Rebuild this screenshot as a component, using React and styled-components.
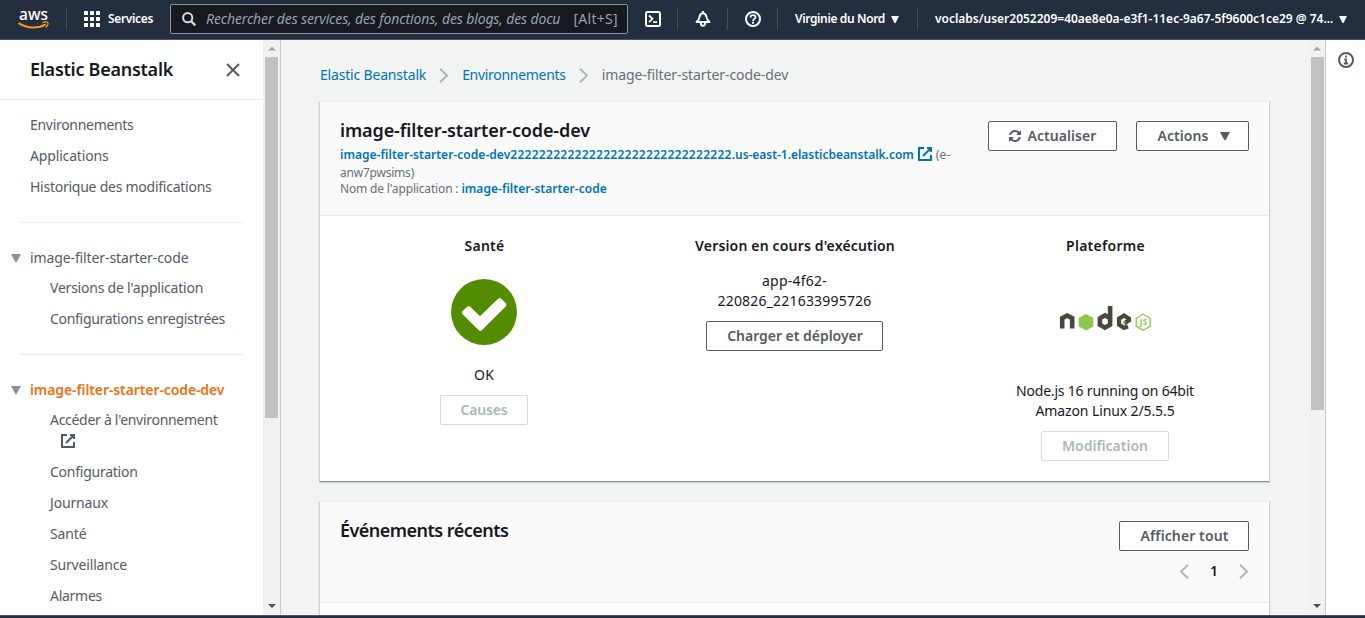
import React from 'react';
import styled, { createGlobalStyle, css } from 'styled-components';

const GlobalStyle = createGlobalStyle`
  * { box-sizing: border-box; }
  body {
    margin: 0;
    overflow: hidden;
    background: #f2f3f3;
    color: #16191f;
    font: 400 14px/20px "Noto Sans", "Open Sans", sans-serif;
    font-variant-ligatures: none;
  }
  svg { display: block; flex: none; overflow: visible; }
`;

const Text = styled.span`
  letter-spacing: ${(p) => p.$track || 0}px;
  white-space: pre;
`;

const Page = styled.div`
  display: flex;
  flex-direction: column;
  height: 618px;
  overflow: hidden;
`;

/* ---------- top navigation ---------- */

const TopBar = styled.header`
  display: flex;
  align-items: flex-start;
  flex: none;
  height: 40px;
  background: #232f3e;
  border-bottom: 1px solid #4c5562;
  color: #fff;
  font-size: 12px;
  font-weight: 600;
`;

const TopItem = styled.div`
  display: flex;
  align-items: center;
  flex: none;
  gap: ${(p) => p.$gap || 0}px;
  width: ${(p) => p.$width}px;
  height: 38px;
  padding-left: ${(p) => p.$pad || 0}px;
`;

const Separator = styled.div`
  flex: none;
  width: 1px;
  height: 22px;
  margin-top: 8px;
  background: #414d5c;
`;

const AwsWord = styled.text`
  font: 500 16.5px "Noto Sans", sans-serif;
  fill: #fff;
`;

const SearchBox = styled.div`
  display: flex;
  align-items: center;
  flex: none;
  width: 458px;
  height: 30px;
  margin-top: 4px;
  padding: 0 9px 0 11px;
  background: #16191f;
  border: 1px solid #879596;
  border-radius: 2px;
  color: #95a5a6;
  font-size: 14px;
  font-weight: 400;
`;

const SearchHint = styled.div`
  flex: none;
  margin-left: 10px;
  font-style: italic;
`;

const Shortcut = styled.div`
  margin-left: auto;
`;

/* ---------- scroll bars ---------- */

const Track = styled.div`
  display: flex;
  flex-direction: column;
  align-items: center;
  flex: none;
  width: ${(p) => p.$width}px;
  height: 100%;
  background: #f1f1f1;
  border-right: 1px solid #c6c9ca;
`;

const Thumb = styled.div`
  width: 13px;
  height: ${(p) => p.$height}px;
  background: #c1c1c1;
`;

const TrackEnd = styled.div`
  display: flex;
  justify-content: center;
  align-items: center;
  flex: none;
  height: 17px;
  margin-top: ${(p) => (p.$last ? 'auto' : 0)};
  padding-bottom: ${(p) => (p.$last ? 2 : 0)}px;
`;

function ScrollBar({ width, thumb }) {
  return (
    <Track $width={width}>
      <TrackEnd>
        <svg width="8" height="5" viewBox="0 0 8 5"><path d="M0 4.500 4 .5l4 4z" fill="#a3a3a3" /></svg>
      </TrackEnd>
      <Thumb $height={thumb} />
      <TrackEnd $last>
        <svg width="8" height="4" viewBox="0 0 8 4"><path d="M0 0h8L4 4z" fill="#505050" /></svg>
      </TrackEnd>
    </Track>
  );
}

/* ---------- side navigation ---------- */

const Body = styled.div`
  display: flex;
  flex: 1;
  min-height: 0;
`;

const Sidebar = styled.aside`
  flex: none;
  width: 263px;
  background: #fff;
  color: #545b64;
`;

const SidebarHeader = styled.div`
  display: flex;
  justify-content: space-between;
  align-items: center;
  height: 60px;
  padding: 0 22px 0 30px;
  border-bottom: 1px solid #eaeded;
  color: #16191f;
  font-size: 18px;
  font-weight: 600;
  line-height: 18px;
`;

const SidebarTitle = styled(Text)`
  padding-bottom: 2px;
`;

const NavGroup = styled.nav`
  display: flex;
  flex-direction: column;
  gap: 11px;
  margin: 0 20px;
  padding: ${(p) => (p.$first ? 15 : 25)}px 0 25px 10px;
  border-bottom: 1px solid #eaeded;
`;

const NavSection = styled.div`
  display: flex;
  align-items: center;
  gap: 9px;
  margin: 0 0 -1px -19px;
  color: ${(p) => (p.$active ? '#ec7211' : 'inherit')};
  font-weight: ${(p) => (p.$active ? 600 : 400)};
`;

const NavLink = styled.div`
  padding-left: ${(p) => (p.$child ? 20 : 0)}px;
`;

const LinkIcon = styled.div`
  height: 21px;
  padding: 3px 0 0 10px;
`;

/* ---------- content ---------- */

const Main = styled.main`
  flex: none;
  width: 1028px;
  padding: 25px 39px 0 38px;
`;

const Breadcrumbs = styled.div`
  display: flex;
  align-items: center;
  gap: 13px;
  height: 20px;
  padding-left: 1px;
  color: #0073bb;
`;

const Crumb = styled(Text)`
  color: ${(p) => (p.$current ? '#687078' : 'inherit')};
`;

const Card = styled.section`
  width: 951px;
  height: ${(p) => p.$height}px;
  margin-top: ${(p) => p.$gap}px;
  background: #fff;
  border: 1px solid #cbcfd0;
  border-top-color: #eaeded;
  border-bottom-color: #879596;
  box-shadow: 0 1px 1px rgba(0, 28, 36, 0.15);
`;

const CardHeader = styled.div`
  display: flex;
  justify-content: space-between;
  height: ${(p) => p.$height}px;
  padding: 19px 20px 0;
  background: #fafafa;
  border-bottom: 1px solid #eaeded;
`;

const CardTitle = styled.h2`
  margin: 0;
  font-size: 18px;
  font-weight: 600;
  line-height: 18px;
`;

const Details = styled.div`
  margin-top: 5px;
  color: #687078;
  font-size: 12px;
  line-height: 15px;
`;

const DetailRow = styled.div`
  display: flex;
  align-items: center;
  gap: ${(p) => p.$gap || 0}px;
  height: ${(p) => p.$height}px;
`;

const StrongLink = styled(Text)`
  color: #0073bb;
  font-weight: 600;
`;

const ButtonRow = styled.div`
  display: flex;
  align-items: flex-start;
  gap: 19px;
`;

const Button = styled.button`
  display: flex;
  align-items: center;
  justify-content: center;
  flex: none;
  gap: ${(p) => p.$gap || 0}px;
  width: ${(p) => p.$width}px;
  height: 30px;
  padding: 0 0 0 ${(p) => p.$nudge || 0}px;
  background: #fff;
  border: 1px solid #545b64;
  border-radius: 2px;
  color: #545b64;
  font: 600 14px/20px "Noto Sans", sans-serif;
  ${(p) => p.$disabled && css`
    border-color: #d5dbdb;
    color: #aab7b8;
  `}
`;

const Columns = styled.div`
  display: grid;
  grid-template-columns: repeat(3, 310.5px);
  padding: 20px 0 0 8.75px;
`;

const Column = styled.div`
  display: flex;
  flex-direction: column;
  align-items: center;
  text-align: center;
`;

const Heading = styled.div`
  padding-left: 1px;
  font-weight: 600;
`;

const Picture = styled.div`
  display: flex;
  align-items: center;
  justify-content: center;
  height: ${(p) => p.$height}px;
  margin: ${(p) => p.$margin};
`;

const Lines = styled.div`
  display: flex;
  flex-direction: column;
  margin: ${(p) => p.$top || 0}px 0 10px;
`;

const Side = styled.div`
  display: flex;
  flex-direction: column;
  align-items: flex-end;
  gap: 10px;
`;

const Pager = styled.div`
  display: flex;
  align-items: center;
  gap: 21px;
  height: 20px;
  font-weight: 600;
`;

const InfoRail = styled.aside`
  flex: 1;
  padding: 12px 0 0 12px;
  background: #fff;
`;

const BottomBar = styled.div`
  flex: none;
  height: 3px;
  background: #232f3e;
  border-top: 1px solid #4c5562;
`;

/* ---------- icons ---------- */

const Caret = ({ color, width = 10, height = 8 }) => (
  <svg width={width} height={height} viewBox="0 0 10 8" preserveAspectRatio="none">
    <path d="M0 0h10L5.700 8H4.300z" fill={color} />
  </svg>
);

const External = ({ color }) => (
  <svg width="16" height="16" viewBox="0 0 16 16" fill="none" stroke={color} strokeWidth="2">
    <path d="M10 2h4v4M6 10l8-8M14 9.048V14H2V2h5" />
  </svg>
);

const Chevron = ({ back }) => (
  <svg width="10" height="15" viewBox="0 0 10 15" fill="none" stroke="#aab7b8" strokeWidth="2">
    <path d={back ? 'M9 .8 2 7.500l7 6.700' : 'M1 .8l7 6.700-7 6.700'} />
  </svg>
);

const AwsLogo = () => (
  <svg width="32" height="26" viewBox="0 0 32 26">
    <AwsWord x="1" y="14" textLength="29" lengthAdjust="spacingAndGlyphs">aws</AwsWord>
    <path d="M.5 17.200c7.500 5 19 5.800 27.200 1.200" fill="none" stroke="#f7981d" strokeWidth="2" />
    <path d="M24.500 16.700c2.300-1 4.500-1 5.300-.4.500 1-.3 3.600-1.900 5.300" fill="none" stroke="#f7981d" strokeWidth="1.300" />
  </svg>
);

const Grid = () => (
  <svg width="16" height="16" viewBox="0 0 16 16" fill="#fff">
    {[0, 6, 12].map((y) => [0, 6, 12].map((x) => (
      <rect key={`${x}-${y}`} x={x} y={y} width="4" height="4" rx=".5" />
    )))}
  </svg>
);

const SearchIcon = () => (
  <svg width="14" height="14" viewBox="0 0 14 14" fill="none" stroke="#d5dbdb" strokeWidth="2">
    <circle cx="5.700" cy="5.700" r="4.600" /><path d="m9 9 4.300 4.300" strokeWidth="2.400" />
  </svg>
);

const Terminal = () => (
  <svg width="16" height="16" viewBox="0 0 16 16" fill="none" stroke="#fff" strokeWidth="2">
    <rect x="1" y="1" width="14" height="14" rx="1.500" /><path d="m4 4.500 3.500 3.300L4 11.200M8 11.200h4" strokeWidth="1.800" />
  </svg>
);

const Bell = () => (
  <svg width="16" height="16" viewBox="0 0 16 16" fill="none" stroke="#fff" strokeWidth="1.900" strokeLinejoin="round">
    <path d="M1.500 11h13c-1.800-1.300-2.700-2.700-3-5C11.100 3.500 10 2.300 8 2.300S4.900 3.500 4.500 6c-.3 2.300-1.200 3.700-3 5zM8 0v2.500" />
    <path d="M5.800 12c0 1.700.8 2.800 2.200 2.800s2.200-1.100 2.200-2.800" />
  </svg>
);

const Help = () => (
  <svg width="16" height="16" viewBox="0 0 16 16" fill="none" stroke="#fff" strokeWidth="2">
    <circle cx="8" cy="8" r="7" />
    <path d="M5.500 6.500c0-1.400 1-2.300 2.500-2.300s2.500.9 2.500 2.100C10.500 7.900 8 7.900 8 9.900" strokeWidth="1.800" />
    <path d="M8 10.800v1.900" />
  </svg>
);

const Info = () => (
  <svg width="16" height="16" viewBox="0 0 16 16" fill="none" stroke="#545b64" strokeWidth="2">
    <circle cx="8" cy="8" r="7" />
    <path d="M8 3.500v2M6.300 7.500H8V11M5.800 11.500h4.400" strokeWidth="1.800" />
  </svg>
);

const Close = () => (
  <svg width="16" height="16" viewBox="0 0 16 16" fill="none" stroke="#545b64" strokeWidth="2">
    <path d="m2 2 12 12M14 2 2 14" />
  </svg>
);

const Refresh = () => (
  <svg width="12" height="12" viewBox="0 0 1536 1536" fill="#545b64">
    <path d="M1511 928q0 5-1 7-64 268-268 434.500T764 1536q-146 0-282.500-55T238 1324l-129 129q-19 19-45 19t-45-19-19-45V960q0-26 19-45t45-19h448q26 0 45 19t19 45-19 45l-137 137q71 66 161 102t187 36q134 0 250-65t186-179q11-17 53-117 8-23 30-23h192q13 0 22.500 9.500t9.500 22.500zm25-800v448q0 26-19 45t-45 19h-448q-26 0-45-19t-19-45 19-45l138-138Q969 256 768 256q-134 0-250 65T332 500q-11 17-53 117-8 23-30 23H50q-13 0-22.500-9.500T18 608v-7q65-268 270-434.500T768 0q146 0 284 55.500T1297 212l130-129q19-19 45-19t45 19 19 45z" />
  </svg>
);

const HealthOk = () => (
  <svg width="66" height="66" viewBox="0 0 66 66">
    <circle cx="33" cy="33" r="33" fill="#538b01" />
    <path d="M16.200 27.700q1.500-1.200 3 0L29 37.200 47.300 19.500q1.300-1 2.700 0l4.900 4.800q1.100 1.600 0 3L30.800 51.300q-1.600 1.200-3 0L11.300 35q-1-1.400 0-2.700z" fill="#fff" />
  </svg>
);

const JsWord = styled.text`
  font: 700 8px "Noto Sans", sans-serif;
  fill: #8cc84b;
`;

const NodeLogo = () => (
  <svg width="92" height="27" viewBox="-0.7 0 92 27" fill="none">
    <g stroke="#46483e" strokeWidth="4.600" strokeLinejoin="miter">
      <path d="M2.500 23.500V13.200l5-2.700 5 2.700v10.300" />
      <path d="M50.400 1v18.700l-5.100 3-5.100-3v-6.400l5.100-3 5.100 3" />
      <path d="M68.300 21.500l-4 1.500-5-3.400v-6l5-3.100 5 3.100v1.800l-5 3" strokeWidth="4.200" />
    </g>
    <path d="m26.300 8.900 7.300 4.200v8.300l-7.300 4.200-7.300-4.200v-8.300z" fill="#8cc84b" />
    <circle cx="64.400" cy="17.200" r="1.500" fill="#8cc84b" />
    <path d="m83.500 9.300 7 4v8l-7 4-7-4v-8z" stroke="#8cc84b" strokeWidth="1.300" />
    <JsWord x="80" y="20" textLength="7.500">JS</JsWord>
  </svg>
);

/* ---------- page ---------- */

export default function App() {
  return (
    <>
      <GlobalStyle />
      <Page>
        <TopBar>
          <TopItem $width={66} $pad={18}><AwsLogo /></TopItem>
          <Separator />
          <TopItem $width={103} $pad={17} $gap={8}>
            <Grid />
            <Text $track={-0.35}>Services</Text>
          </TopItem>
          <SearchBox>
            <SearchIcon />
            <SearchHint>
              <Text $track={-0.14}>Rechercher des services, des fonctions, des blogs, des docu</Text>
            </SearchHint>
            <Shortcut><Text $track={0.3}>[Alt+S]</Text></Shortcut>
          </SearchBox>
          <TopItem $width={49} $pad={17}><Terminal /></TopItem>
          <Separator />
          <TopItem $width={49} $pad={17}><Bell /></TopItem>
          <Separator />
          <TopItem $width={49} $pad={17}><Help /></TopItem>
          <Separator />
          <TopItem $width={139} $pad={17} $gap={6}>
            <Text $track={-0.37}>Virginie du Nord</Text>
            <Caret color="#fff" width={8} height={7} />
          </TopItem>
          <Separator />
          <TopItem $width={440} $pad={17} $gap={6}>
            <Text $track={-0.01}>voclabs/user2052209=40ae8e0a-e3f1-11ec-9a67-5f9600c1ce29 @ 74...</Text>
            <Caret color="#fff" width={8} height={7} />
          </TopItem>
        </TopBar>

        <Body>
          <Sidebar>
            <SidebarHeader>
              <SidebarTitle $track={-0.26}>Elastic Beanstalk</SidebarTitle>
              <Close />
            </SidebarHeader>
            <NavGroup $first>
              <NavLink><Text $track={-0.3}>Environnements</Text></NavLink>
              <NavLink><Text $track={-0.16}>Applications</Text></NavLink>
              <NavLink><Text $track={-0.25}>Historique des modifications</Text></NavLink>
            </NavGroup>
            <NavGroup>
              <NavSection>
                <Caret color="#879596" />
                <Text $track={-0.11}>image-filter-starter-code</Text>
              </NavSection>
              <NavLink $child><Text $track={-0.22}>Versions de l'application</Text></NavLink>
              <NavLink $child><Text $track={-0.3}>Configurations enregistrées</Text></NavLink>
            </NavGroup>
            <NavGroup>
              <NavSection $active>
                <Caret color="#879596" />
                <Text $track={-0.1}>image-filter-starter-code-dev</Text>
              </NavSection>
              <NavLink $child>
                <Text $track={-0.29}>Accéder à l'environnement</Text>
                <LinkIcon><External color="#545b64" /></LinkIcon>
              </NavLink>
              <NavLink $child><Text $track={-0.25}>Configuration</Text></NavLink>
              <NavLink $child><Text $track={-0.16}>Journaux</Text></NavLink>
              <NavLink $child><Text $track={-0.13}>Santé</Text></NavLink>
              <NavLink $child><Text $track={-0.17}>Surveillance</Text></NavLink>
              <NavLink $child><Text $track={-0.27}>Alarmes</Text></NavLink>
            </NavGroup>
          </Sidebar>
          <ScrollBar width={18} thumb={361} />

          <Main>
            <Breadcrumbs>
              <Crumb $track={-0.18}>Elastic Beanstalk</Crumb>
              <Chevron />
              <Crumb $track={-0.3}>Environnements</Crumb>
              <Chevron />
              <Crumb $current $track={-0.08}>image-filter-starter-code-dev</Crumb>
            </Breadcrumbs>

            <Card $height={381} $gap={16}>
              <CardHeader $height={114}>
                <div>
                  <CardTitle><Text $track={-0.13}>image-filter-starter-code-dev</Text></CardTitle>
                  <Details>
                    <DetailRow $height={20} $gap={3}>
                      <StrongLink $track={0.04}>image-filter-starter-code-dev<Text $track={0.28}>2222222222222222222222222222222</Text><Text $track={-0.03}>.us-east-1.elasticbeanstalk.com</Text></StrongLink>
                      <External color="#0073bb" />
                      <Text $track={0.2}>(e-</Text>
                    </DetailRow>
                    <DetailRow $height={17}><Text $track={-0.22}>anw7pwsims)</Text></DetailRow>
                    <DetailRow $height={14}>
                      <Text $track={-0.16}>Nom de l'application : </Text>
                      <StrongLink $track={0.04}>image-filter-starter-code</StrongLink>
                    </DetailRow>
                  </Details>
                </div>
                <ButtonRow>
                  <Button $width={129} $gap={6} $nudge={1}><Refresh /><Text $track={0.07}>Actualiser</Text></Button>
                  <Button $width={113} $gap={12} $nudge={3}><Text $track={0.06}>Actions</Text><Caret color="#545b64" /></Button>
                </ButtonRow>
              </CardHeader>
              <Columns>
                <Column>
                  <Heading><Text $track={0.26}>Santé</Text></Heading>
                  <Picture $height={66} $margin="23px 0 20px"><HealthOk /></Picture>
                  <Lines><Text $track={0.2}>OK</Text></Lines>
                  <Button $width={88} $disabled><Text $track={-0.18}>Causes</Text></Button>
                </Column>
                <Column>
                  <Heading><Text $track={0.17}>Version en cours d'exécution</Text></Heading>
                  <Lines $top={15}>
                    <Text $track={0.23}>app-4f62-</Text>
                    <Text $track={0.19}>220826_221633995726</Text>
                  </Lines>
                  <Button $width={177} $nudge={1}><Text $track={-0.03}>Charger et déployer</Text></Button>
                </Column>
                <Column>
                  <Heading><Text $track={0.28}>Plateforme</Text></Heading>
                  <Picture $height={27} $margin="49px 0"><NodeLogo /></Picture>
                  <Lines>
                    <Text $track={-0.2}>Node.js 16 running on 64bit</Text>
                    <Text $track={-0.11}>Amazon Linux 2/5.5.5</Text>
                  </Lines>
                  <Button $width={128} $disabled><Text>Modification</Text></Button>
                </Column>
              </Columns>
            </Card>

            <Card $height={300} $gap={19}>
              <CardHeader $height={101}>
                <CardTitle><Text $track={-0.52}>Événements récents</Text></CardTitle>
                <Side>
                  <Button $width={130} $nudge={1}><Text $track={0.11}>Afficher tout</Text></Button>
                  <Pager><Chevron back /><span>1</span><Chevron /></Pager>
                </Side>
              </CardHeader>
            </Card>
          </Main>
          <ScrollBar width={17} thumb={353} />
          <InfoRail><Info /></InfoRail>
        </Body>
        <BottomBar />
      </Page>
    </>
  );
}
